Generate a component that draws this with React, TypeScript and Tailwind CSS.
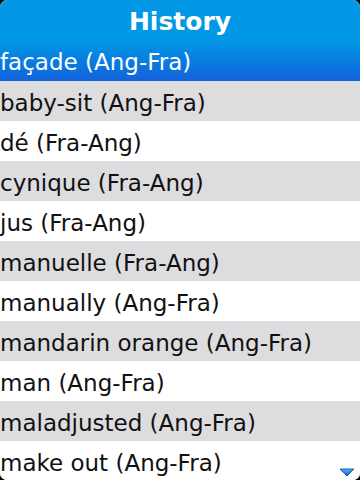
const ITEMS = [
  'baby-sit (Ang-Fra)',
  'dé (Fra-Ang)',
  'cynique (Fra-Ang)',
  'jus (Fra-Ang)',
  'manuelle (Fra-Ang)',
  'manually (Ang-Fra)',
  'mandarin orange (Ang-Fra)',
  'man (Ang-Fra)',
  'maladjusted (Ang-Fra)',
  'make out (Ang-Fra)',
]

export default function App() {
  return (
    <div className="w-[360px] h-[480px] bg-black overflow-hidden" style={{ fontFamily: '"DejaVu Sans", sans-serif' }}>
      <div className="relative w-full h-full rounded-[7px] overflow-hidden bg-white flex flex-col">
        <div className="h-[40px] shrink-0 bg-[#0398e6] flex items-center justify-center pt-[2px]">
          <span className="text-white font-bold text-[25px] leading-none">History</span>
        </div>
        <div className="h-[41px] shrink-0 bg-gradient-to-b from-[#0398e6] to-[#1361da] flex items-center pt-1">
          <span className="text-white text-[23px] leading-none">façade (Ang-Fra)</span>
        </div>
        {ITEMS.map((t, i) => (
          <div
            key={i}
            className={`h-10 shrink-0 flex items-center pt-1 ${i % 2 === 0 ? 'bg-[#dddcdf]' : 'bg-white'}`}
          >
            <span className="text-[#111] text-[23px] leading-none">{t}</span>
          </div>
        ))}
        <svg className="absolute right-[5px] bottom-[3px]" width="16" height="9" viewBox="0 0 16 9">
          <defs>
            <linearGradient id="ar" x1="0" y1="0" x2="0" y2="1">
              <stop offset="0" stopColor="#4cb4ff" />
              <stop offset="1" stopColor="#0a5fd6" />
            </linearGradient>
          </defs>
          <path d="M1 1 L15 1 L8 8 Z" fill="url(#ar)" stroke="#0a3f8a" strokeWidth="0.8" />
        </svg>
      </div>
    </div>
  )
}
